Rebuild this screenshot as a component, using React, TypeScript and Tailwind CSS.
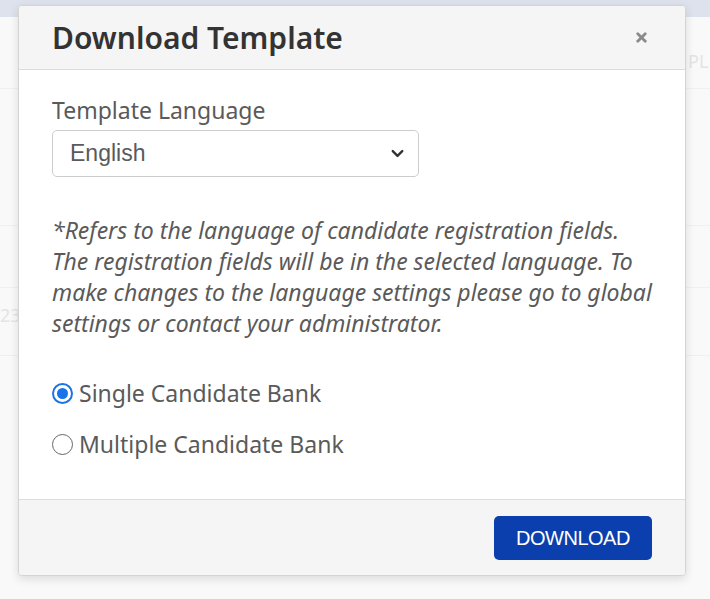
import { ChevronDown, X } from "lucide-react"

export default function App() {
  return (
    <div className="relative h-[599px] w-[710px] overflow-hidden bg-[#f9f9fa] font-['Noto_Sans',sans-serif]">
      {/* page behind the modal */}
      <div className="h-[17px] bg-[#dde2ec]" />
      <div className="absolute left-[688px] top-[48px] text-[18px] text-[#e4e4e4]">PL</div>
      <div className="absolute left-0 top-[302px] text-[18px] text-[#e4e4e4]">23</div>
      <div className="absolute left-0 right-0 top-[88px] h-px bg-[#f0f0f0]" />
      <div className="absolute left-0 right-0 top-[225px] h-px bg-[#f0f0f0]" />
      <div className="absolute left-0 right-0 top-[287px] h-px bg-[#f0f0f0]" />
      <div className="absolute left-0 right-0 top-[355px] h-px bg-[#f0f0f0]" />

      {/* modal */}
      <div className="absolute left-[18px] top-[5px] flex h-[571px] w-[668px] flex-col overflow-hidden rounded-[4px] border border-[#d4d4d4] bg-white shadow-[0_3px_10px_rgba(0,0,0,0.12)]">
        <div className="flex h-[64px] items-center justify-between border-b border-[#dcdcdc] bg-[#f5f5f5] pl-[33px] pr-[36px]">
          <h2 className="text-[30px] font-semibold leading-[36px] text-[#333]">Download Template</h2>
          <X className="h-[15px] w-[15px] text-[#8a8a8a]" strokeWidth={4.5} />
        </div>

        <div className="flex-1 px-[33px] pt-[26px]">
          <label className="block text-[23px] leading-[28px] text-[#5a5a5a]">Template Language</label>
          <div className="mt-[6px] flex h-[47px] w-[367px] items-center justify-between rounded-[5px] border border-[#ccc] pl-[17px] pr-[11px]">
            <span className="font-['Liberation_Sans',sans-serif] text-[23px] text-[#5a5a5a]">English</span>
            <ChevronDown className="h-[19px] w-[19px] text-[#333]" strokeWidth={3} />
          </div>

          <p className="mt-[38px] whitespace-nowrap text-[23px] italic leading-[31px] text-[#5a5a5a]">
            *Refers to the language of candidate registration fields.
            <br />
            The registration fields will be in the selected language. To
            <br />
            make changes to the language settings please go to global
            <br />
            settings or contact your administrator.
          </p>

          <div className="mt-[40px] flex flex-col gap-[23px]">
            <label className="flex items-center gap-[6px] text-[23px] leading-[28px] text-[#5a5a5a]">
              <span className="flex h-[21px] w-[21px] items-center justify-center rounded-full border-[2px] border-[#1a73e8]">
                <span className="h-[11px] w-[11px] rounded-full bg-[#1a73e8]" />
              </span>
              Single Candidate Bank
            </label>
            <label className="flex items-center gap-[6px] text-[23px] leading-[28px] text-[#5a5a5a]">
              <span className="h-[21px] w-[21px] rounded-full border-[1.5px] border-[#666]" />
              Multiple Candidate Bank
            </label>
          </div>
        </div>

        <div className="flex h-[76px] items-center justify-end border-t border-[#dcdcdc] bg-[#f5f5f5] pr-[33px]">
          <button className="h-[44px] w-[158px] rounded-[5px] bg-[#0b3fad] font-['Liberation_Sans',sans-serif] text-[20px] tracking-[-0.5px] text-white">
            DOWNLOAD
          </button>
        </div>
      </div>
    </div>
  )
}
